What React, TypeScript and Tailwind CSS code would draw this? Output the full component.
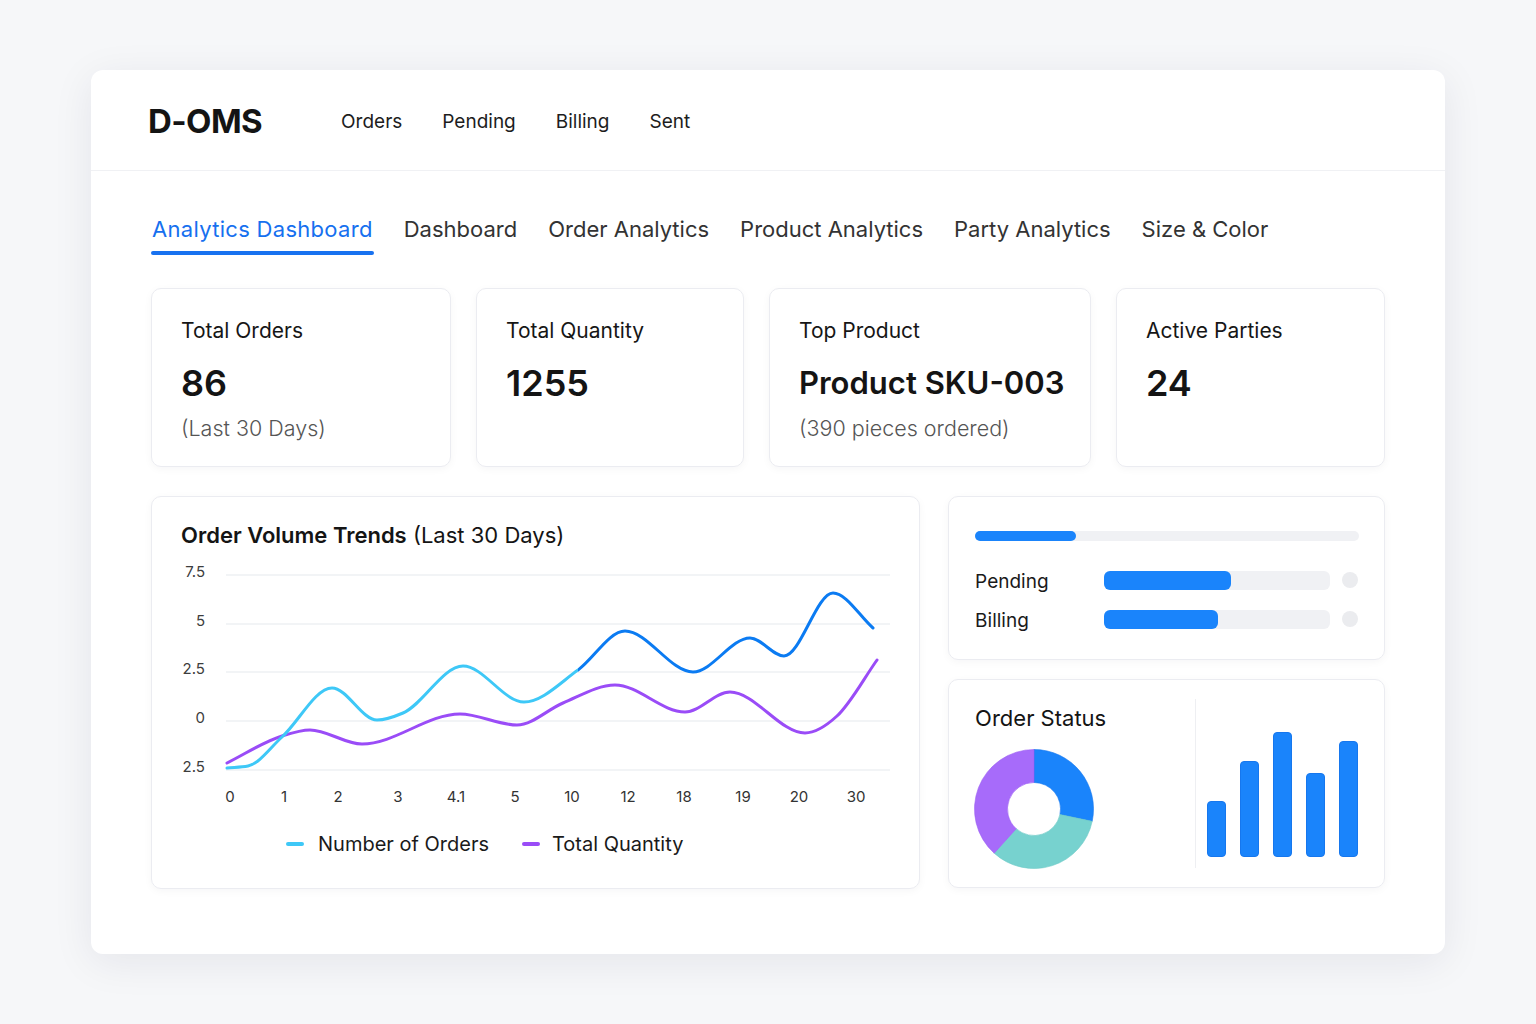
import React from 'react';

type Pt = [number, number];

// monotone-x cubic (like d3 curveMonotoneX) so peaks stay flat
function smoothPath(pts: Pt[]) {
  const n = pts.length;
  const m: number[] = [];
  for (let i = 0; i < n - 1; i++) m[i] = (pts[i + 1][1] - pts[i][1]) / (pts[i + 1][0] - pts[i][0]);
  const t: number[] = [];
  t[0] = m[0];
  t[n - 1] = m[n - 2];
  for (let i = 1; i < n - 1; i++) {
    const h0 = pts[i][0] - pts[i - 1][0];
    const h1 = pts[i + 1][0] - pts[i][0];
    const s0 = m[i - 1];
    const s1 = m[i];
    if (s0 * s1 <= 0) {
      t[i] = 0;
    } else {
      const p = (s0 * h1 + s1 * h0) / (h0 + h1);
      t[i] = (Math.sign(s0) + Math.sign(s1)) * Math.min(Math.abs(s0), Math.abs(s1), 0.5 * Math.abs(p));
    }
  }
  let d = `M${pts[0][0]},${pts[0][1]}`;
  for (let i = 0; i < n - 1; i++) {
    const [x0, y0] = pts[i];
    const [x1, y1] = pts[i + 1];
    const dx = (x1 - x0) / 3;
    d += ` C${(x0 + dx).toFixed(1)},${(y0 + t[i] * dx).toFixed(1)} ${(x1 - dx).toFixed(1)},${(y1 - t[i + 1] * dx).toFixed(1)} ${x1},${y1}`;
  }
  return d;
}

function arcSeg(cx: number, cy: number, r0: number, r1: number, a0: number, a1: number) {
  const rad = (a: number) => ((a - 90) * Math.PI) / 180;
  const p = (r: number, a: number) => [cx + r * Math.cos(rad(a)), cy + r * Math.sin(rad(a))];
  const large = a1 - a0 > 180 ? 1 : 0;
  const [x0, y0] = p(r1, a0);
  const [x1, y1] = p(r1, a1);
  const [x2, y2] = p(r0, a1);
  const [x3, y3] = p(r0, a0);
  return `M${x0},${y0} A${r1},${r1} 0 ${large} 1 ${x1},${y1} L${x2},${y2} A${r0},${r0} 0 ${large} 0 ${x3},${y3} Z`;
}

const ordersPts: Pt[] = [
  [227, 768], [248, 766], [282, 737], [332, 688], [377, 720], [403, 713], [463, 666],
  [524, 702], [578, 670], [625, 631], [693, 672], [750, 638], [784, 656], [833, 593], [873, 628],
];

const qtyPts: Pt[] = [
  [227, 763], [282, 736], [310, 730], [362, 744], [460, 714], [517, 725], [563, 703],
  [615, 685], [685, 712], [730, 692], [805, 733], [837, 716], [877, 660],
];

const yTicks = [
  { label: '7.5', y: 575 },
  { label: '5', y: 624 },
  { label: '2.5', y: 672 },
  { label: '0', y: 721 },
  { label: '2.5', y: 770 },
];

const xTicks: [string, number][] = [
  ['0', 230], ['1', 284], ['2', 338], ['3', 398], ['4.1', 456], ['5', 515],
  ['10', 572], ['12', 628], ['18', 684], ['19', 743], ['20', 799], ['30', 856],
];

const stats = [
  { title: 'Total Orders', value: '86', sub: '(Last 30 Days)', w: 'w-[300px]' },
  { title: 'Total Quantity', value: '1255', sub: '', w: 'w-[268px]' },
  { title: 'Top Product', value: 'Product SKU-003', sub: '(390 pieces ordered)', w: 'w-[322px]' },
  { title: 'Active Parties', value: '24', sub: '', w: 'w-[269px]' },
];

const tabs = ['Analytics Dashboard', 'Dashboard', 'Order Analytics', 'Product Analytics', 'Party Analytics', 'Size & Color'];

const bars = [56, 96, 125, 84, 116];

function TrendChart() {
  const ordersD = smoothPath(ordersPts);
  return (
    <svg width={714} height={262} viewBox="181 549 714 262" className="block overflow-visible">
      <defs>
        <clipPath id="cyanPart">
          <rect x={150} y={540} width={428} height={300} />
        </clipPath>
        <clipPath id="bluePart">
          <rect x={578} y={540} width={400} height={300} />
        </clipPath>
      </defs>
      {yTicks.map((t, i) => (
        <g key={i}>
          <line x1={226} x2={890} y1={t.y} y2={t.y} stroke="#eef0f3" strokeWidth={1.5} />
          <text x={205} y={t.y - 2} textAnchor="end" dominantBaseline="middle" fontSize={15} fill="#3d3d3d">
            {t.label}
          </text>
        </g>
      ))}
      {xTicks.map(([l, x]) => (
        <text key={l} x={x} y={798} textAnchor="middle" dominantBaseline="middle" fontSize={15} fill="#333">
          {l}
        </text>
      ))}
      <path d={smoothPath(qtyPts)} fill="none" stroke="#9a4cf7" strokeWidth={3} strokeLinecap="round" />
      <path d={ordersD} fill="none" stroke="#3ec8f7" strokeWidth={3} strokeLinecap="round" clipPath="url(#cyanPart)" />
      <path d={ordersD} fill="none" stroke="#0b7bf2" strokeWidth={3} strokeLinecap="round" clipPath="url(#bluePart)" />
    </svg>
  );
}

function Donut() {
  return (
    <svg width={122} height={122} viewBox="0 0 122 122" className="block">
      <path d={arcSeg(60, 60, 26.5, 59.5, 0, 102)} fill="#1a84fb" stroke="#1677ee" strokeWidth={0.6} />
      <path d={arcSeg(60, 60, 26.5, 59.5, 102, 222)} fill="#77d2cf" stroke="#6ccac6" strokeWidth={0.6} />
      <path d={arcSeg(60, 60, 26.5, 59.5, 222, 360)} fill="#a76bfa" stroke="#9c5ff3" strokeWidth={0.6} />
    </svg>
  );
}

export default function App() {
  return (
    <div className="min-h-screen bg-[#f6f7f9] pt-[70px] pl-[91px] font-['Inter',sans-serif] text-[#151515]">
      <div className="w-[1354px] h-[884px] bg-white rounded-[12px] shadow-[0_8px_40px_rgba(20,30,60,0.08)] flex flex-col">
        {/* top nav */}
        <header className="h-[101px] flex items-center pl-[57px] border-b border-[#f0f1f4]">
          <div className="text-[33px] font-bold tracking-[-0.6px] text-[#141414] mt-[4px]">D-OMS</div>
          <nav className="ml-[79px] flex gap-[40px] text-[19px] text-[#1d1d1d] mt-[5px]">
            <span>Orders</span>
            <span>Pending</span>
            <span>Billing</span>
            <span>Sent</span>
          </nav>
        </header>

        <div className="px-[60px] flex flex-col">
          {/* tabs */}
          <div className="flex gap-[29px] pt-[43px]">
            {tabs.map((t, i) => (
              <div key={t} className="flex flex-col">
                <span className={`text-[22px] leading-[30px] px-[1px] ${i === 0 ? 'text-[#1670ef] tracking-[0.3px]' : 'text-[#333]'}`}>{t}</span>
                <div className={`h-[4px] mt-[7px] rounded-full ${i === 0 ? 'bg-[#1872f0]' : 'bg-transparent'}`} />
              </div>
            ))}
          </div>

          {/* stat cards */}
          <div className="flex gap-[25px] mt-[33px]">
            {stats.map(s => (
              <div key={s.title} className={`${s.w} h-[179px] rounded-[10px] border border-[#ebecf1] shadow-[0_2px_8px_rgba(20,30,60,0.04)] pt-[28px] pl-[29px]`}>
                <div className="text-[21px] leading-[28px] text-[#161616]">{s.title}</div>
                <div className={`mt-[18px] leading-[40px] font-semibold text-[#141414] ${s.value.length > 6 ? 'text-[31px]' : 'text-[36px]'}`}>
                  {s.value}
                </div>
                {s.sub && <div className="mt-[11px] text-[21.5px] leading-[28px] text-[#555] font-light">{s.sub}</div>}
              </div>
            ))}
          </div>

          {/* bottom row */}
          <div className="flex gap-[28px] mt-[29px]">
            <div className="w-[771px] h-[393px] rounded-[10px] border border-[#ebecf1] shadow-[0_2px_8px_rgba(20,30,60,0.04)] pt-[24px] pl-[29px]">
              <div className="text-[22px] leading-[28px] text-[#141414]">
                <span className="font-semibold">Order Volume Trends</span> (Last 30 Days)
              </div>
              <TrendChart />
              <div className="flex items-center pl-[105px] mt-[19px] text-[20px] leading-[28px] text-[#1a1a1a]">
                <span className="w-[18px] h-[4px] rounded-full bg-[#3ec8f7]" />
                <span className="ml-[14px]">Number of Orders</span>
                <span className="ml-[33px] w-[18px] h-[4px] rounded-full bg-[#9a4cf7]" />
                <span className="ml-[12px]">Total Quantity</span>
              </div>
            </div>

            <div className="w-[438px] flex flex-col gap-[19px]">
              <div className="h-[164px] rounded-[10px] border border-[#ebecf1] shadow-[0_2px_8px_rgba(20,30,60,0.04)] pt-[34px] pl-[26px] pr-[25px]">
                <div className="h-[10px] rounded-full bg-[#f0f1f4]">
                  <div className="h-full w-[101px] rounded-full bg-[#1a84fb]" />
                </div>
                <div className="mt-[29px] flex flex-col gap-[19px]">
                  {[
                    { label: 'Pending', fill: 'w-[127px]' },
                    { label: 'Billing', fill: 'w-[114px]' },
                  ].map(r => (
                    <div key={r.label} className="flex items-center h-[20px]">
                      <span className="w-[129px] text-[19px] leading-[24px] text-[#1a1a1a] translate-y-[2px]">{r.label}</span>
                      <div className="w-[226px] h-[19px] rounded-[6px] bg-[#f0f1f4]">
                        <div className={`${r.fill} h-full rounded-[6px] bg-[#1a84fb]`} />
                      </div>
                      <span className="ml-[12px] w-[16px] h-[16px] rounded-full bg-[#ebecef]" />
                    </div>
                  ))}
                </div>
              </div>

              <div className="h-[209px] rounded-[10px] border border-[#ebecf1] shadow-[0_2px_8px_rgba(20,30,60,0.04)] flex pl-[26px]">
                <div className="w-[220px] flex flex-col pt-[24px]">
                  <div className="text-[22px] leading-[28px] text-[#141414]">Order Status</div>
                  <div className="mt-[17px] -ml-[1px]">
                    <Donut />
                  </div>
                </div>
                <div className="mt-[19px] h-[169px] w-[1px] bg-[#eeeff2]" />
                <div className="flex items-end gap-[14px] pl-[11px] pb-[30px]">
                  {bars.map((h, i) => (
                    <div
                      key={i}
                      className="w-[19px] rounded-[4px] bg-[#1a84fb] border border-[#1677ee]"
                      style={{ height: h }}
                    />
                  ))}
                </div>
              </div>
            </div>
          </div>
        </div>
      </div>
    </div>
  );
}
